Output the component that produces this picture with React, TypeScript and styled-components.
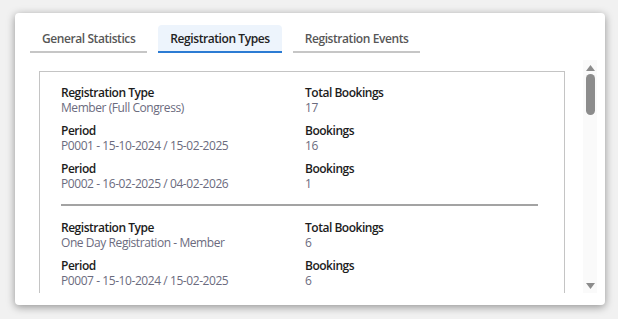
import styled, { createGlobalStyle } from 'styled-components'

const GlobalStyle = createGlobalStyle`
	html, body {
		margin: 0;
		padding: 0;
		background: #f1f1f1;
		font-family: 'Open Sans', 'Noto Sans', sans-serif;
	}
`

const Page = styled.div`
	padding: 13px 13px 14px 15px;
`

const Card = styled.div`
	width: 590px;
	height: 292px;
	box-sizing: border-box;
	background: #fff;
	border-radius: 4px;
	box-shadow: 0 2px 9px rgba(0, 0, 0, 0.4);
	padding: 12px 8px 12px 15px;
	display: flex;
	flex-direction: column;
`

const Tabs = styled.div`
	display: flex;
	gap: 11px;
`

const Tab = styled.div<{ $active?: boolean }>`
	height: 28px;
	box-sizing: border-box;
	padding: 0 12px;
	display: flex;
	align-items: center;
	font-size: 12px;
	letter-spacing: -0.42px;
	font-weight: 600;
	color: ${(p) => (p.$active ? '#222' : '#575757')};
	background: ${(p) => (p.$active ? '#edf4fc' : 'transparent')};
	border-bottom: 2px solid ${(p) => (p.$active ? '#2b7bd3' : '#c6c6c6')};
	border-radius: 4px 4px 0 0;
`

const ScrollArea = styled.div`
	margin-top: 7px;
	height: 233px;
	display: flex;
`

const Viewport = styled.div`
	flex: 1;
	overflow: hidden;
	padding: 11px 18px 0 9px;
`

const Box = styled.div`
	border: 1px solid #c4c4c4;
	padding: 0 26px 0 21px;
`

const Group = styled.div<{ $last?: boolean }>`
	padding: 13px 0 13px;
	border-bottom: ${(p) => (p.$last ? 'none' : '2px solid #a3a3a3')};

	& + & {
		padding-top: 14px;
	}
`

const Row = styled.div`
	display: grid;
	grid-template-columns: 244px 1fr;
	& + & {
		margin-top: 8px;
	}
`

const Field = styled.div`
	display: flex;
	flex-direction: column;
`

const Label = styled.span`
	font-size: 12px;
	line-height: 15px;
	letter-spacing: -0.48px;
	font-weight: 600;
	color: #1c1c1c;
`

const Value = styled.span`
	font-size: 12px;
	line-height: 15px;
	letter-spacing: -0.43px;
	color: #6b6b7e;
`

const Scrollbar = styled.div`
	width: 14px;
	background: #fafafa;
	display: flex;
	flex-direction: column;
	align-items: center;
	padding: 5px 0 4px;
	box-sizing: border-box;
`

const Thumb = styled.div`
	width: 9px;
	height: 41px;
	margin-top: 3px;
	border-radius: 5px;
	background: #8c8c8c;
`

const Spacer = styled.div`
	flex: 1;
`

const Arrow = ({ down }: { down?: boolean }) => (
	<svg width='9' height='6' viewBox='0 0 9 6'>
		<polygon points={down ? '0,0 9,0 4.5,6' : '0,6 9,6 4.5,0'} fill='#8c8c8c' />
	</svg>
)

type Item = { label: string; value: string; rightLabel: string; rightValue: string }

const groups: Item[][] = [
	[
		{ label: 'Registration Type', value: 'Member (Full Congress)', rightLabel: 'Total Bookings', rightValue: '17' },
		{ label: 'Period', value: 'P0001 - 15-10-2024 / 15-02-2025', rightLabel: 'Bookings', rightValue: '16' },
		{ label: 'Period', value: 'P0002 - 16-02-2025 / 04-02-2026', rightLabel: 'Bookings', rightValue: '1' },
	],
	[
		{ label: 'Registration Type', value: 'One Day Registration - Member', rightLabel: 'Total Bookings', rightValue: '6' },
		{ label: 'Period', value: 'P0007 - 15-10-2024 / 15-02-2025', rightLabel: 'Bookings', rightValue: '6' },
	],
]

export default function App() {
	return (
		<>
			<GlobalStyle />
			<Page>
				<Card>
					<Tabs>
						<Tab>General Statistics</Tab>
						<Tab $active>Registration Types</Tab>
						<Tab>Registration Events</Tab>
					</Tabs>
					<ScrollArea>
						<Viewport>
							<Box>
								{groups.map((g, i) => (
									<Group key={i} $last={i === groups.length - 1}>
										{g.map((it, j) => (
											<Row key={j}>
												<Field>
													<Label>{it.label}</Label>
													<Value>{it.value}</Value>
												</Field>
												<Field>
													<Label>{it.rightLabel}</Label>
													<Value>{it.rightValue}</Value>
												</Field>
											</Row>
										))}
									</Group>
								))}
							</Box>
						</Viewport>
						<Scrollbar>
							<Arrow />
							<Thumb />
							<Spacer />
							<Arrow down />
						</Scrollbar>
					</ScrollArea>
				</Card>
			</Page>
		</>
	)
}
